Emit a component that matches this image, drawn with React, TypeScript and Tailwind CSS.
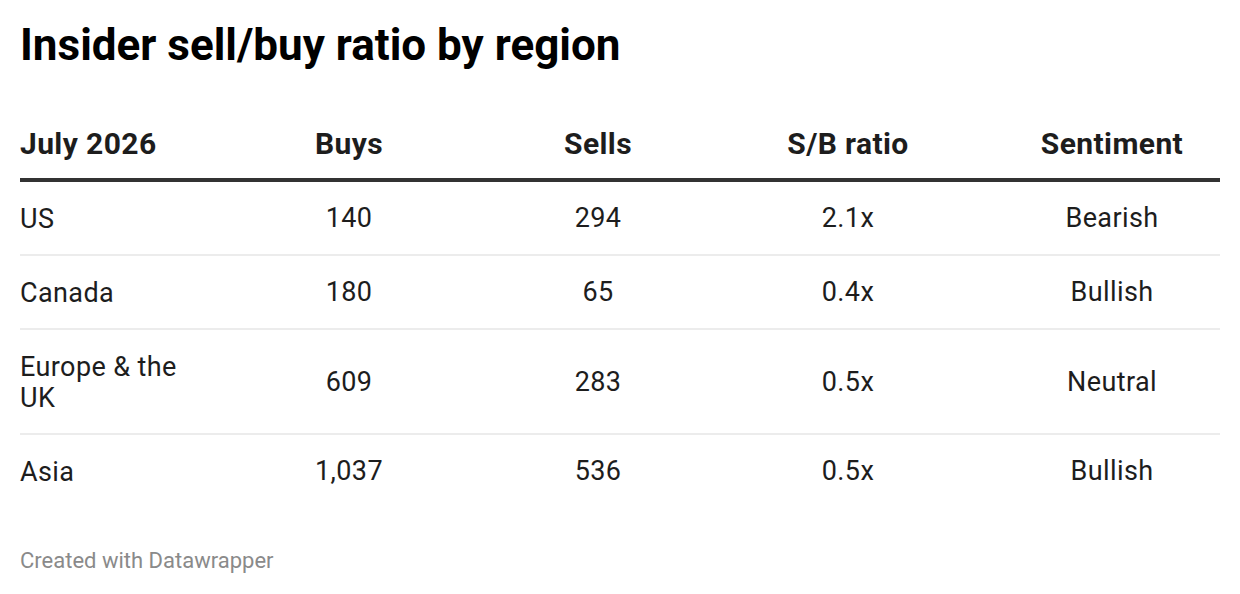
import React from "react";

const rows = [
  { region: "US", buys: "140", sells: "294", ratio: "2.1x", sentiment: "Bearish" },
  { region: "Canada", buys: "180", sells: "65", ratio: "0.4x", sentiment: "Bullish" },
  { region: "Europe & the UK", buys: "609", sells: "283", ratio: "0.5x", sentiment: "Neutral" },
  { region: "Asia", buys: "1,037", sells: "536", ratio: "0.5x", sentiment: "Bullish" },
];

const cols = "grid grid-cols-[204px_250px_248px_252px_246px]";

export default function App() {
  return (
    <div
      className="w-[1240px] h-[594px] bg-white px-[20px] pt-[19px]"
      style={{ fontFamily: "Roboto, 'Liberation Sans', sans-serif" }}
    >
      <h1 className="text-[44px] leading-[1.2] font-bold text-black">
        Insider sell/buy ratio by region
      </h1>
      <div className="mt-[54px] w-[1200px]">
        <div className={`${cols} items-end border-b-[4px] border-[#333333] pb-[16px] text-[30px] leading-[36px] font-bold tracking-[0.4px] text-[#1d1d1d]`}>
          <div>July 2026</div>
          <div className="text-center">Buys</div>
          <div className="text-center">Sells</div>
          <div className="text-center">S/B ratio</div>
          <div className="text-center pl-[30px]">Sentiment</div>
        </div>
        {rows.map((r, i) => (
          <div
            key={r.region}
            className={`${cols} items-center pt-[2px] text-[27px] leading-[31px] tracking-[0.4px] text-[#1d1d1d] ${
              i < rows.length - 1 ? "border-b-2 border-[#ececec]" : ""
            }`}
          >
            <div className="pt-[20.5px] pb-[18.5px] pr-[24px]">{r.region}</div>
            <div className="text-center">{r.buys}</div>
            <div className="text-center">{r.sells}</div>
            <div className="text-center">{r.ratio}</div>
            <div className="text-center pl-[30px]">{r.sentiment}</div>
          </div>
        ))}
      </div>
      <div className="mt-[41px] text-[22px] leading-[1.2] text-[#8a8a8a]">Created with Datawrapper</div>
    </div>
  );
}
